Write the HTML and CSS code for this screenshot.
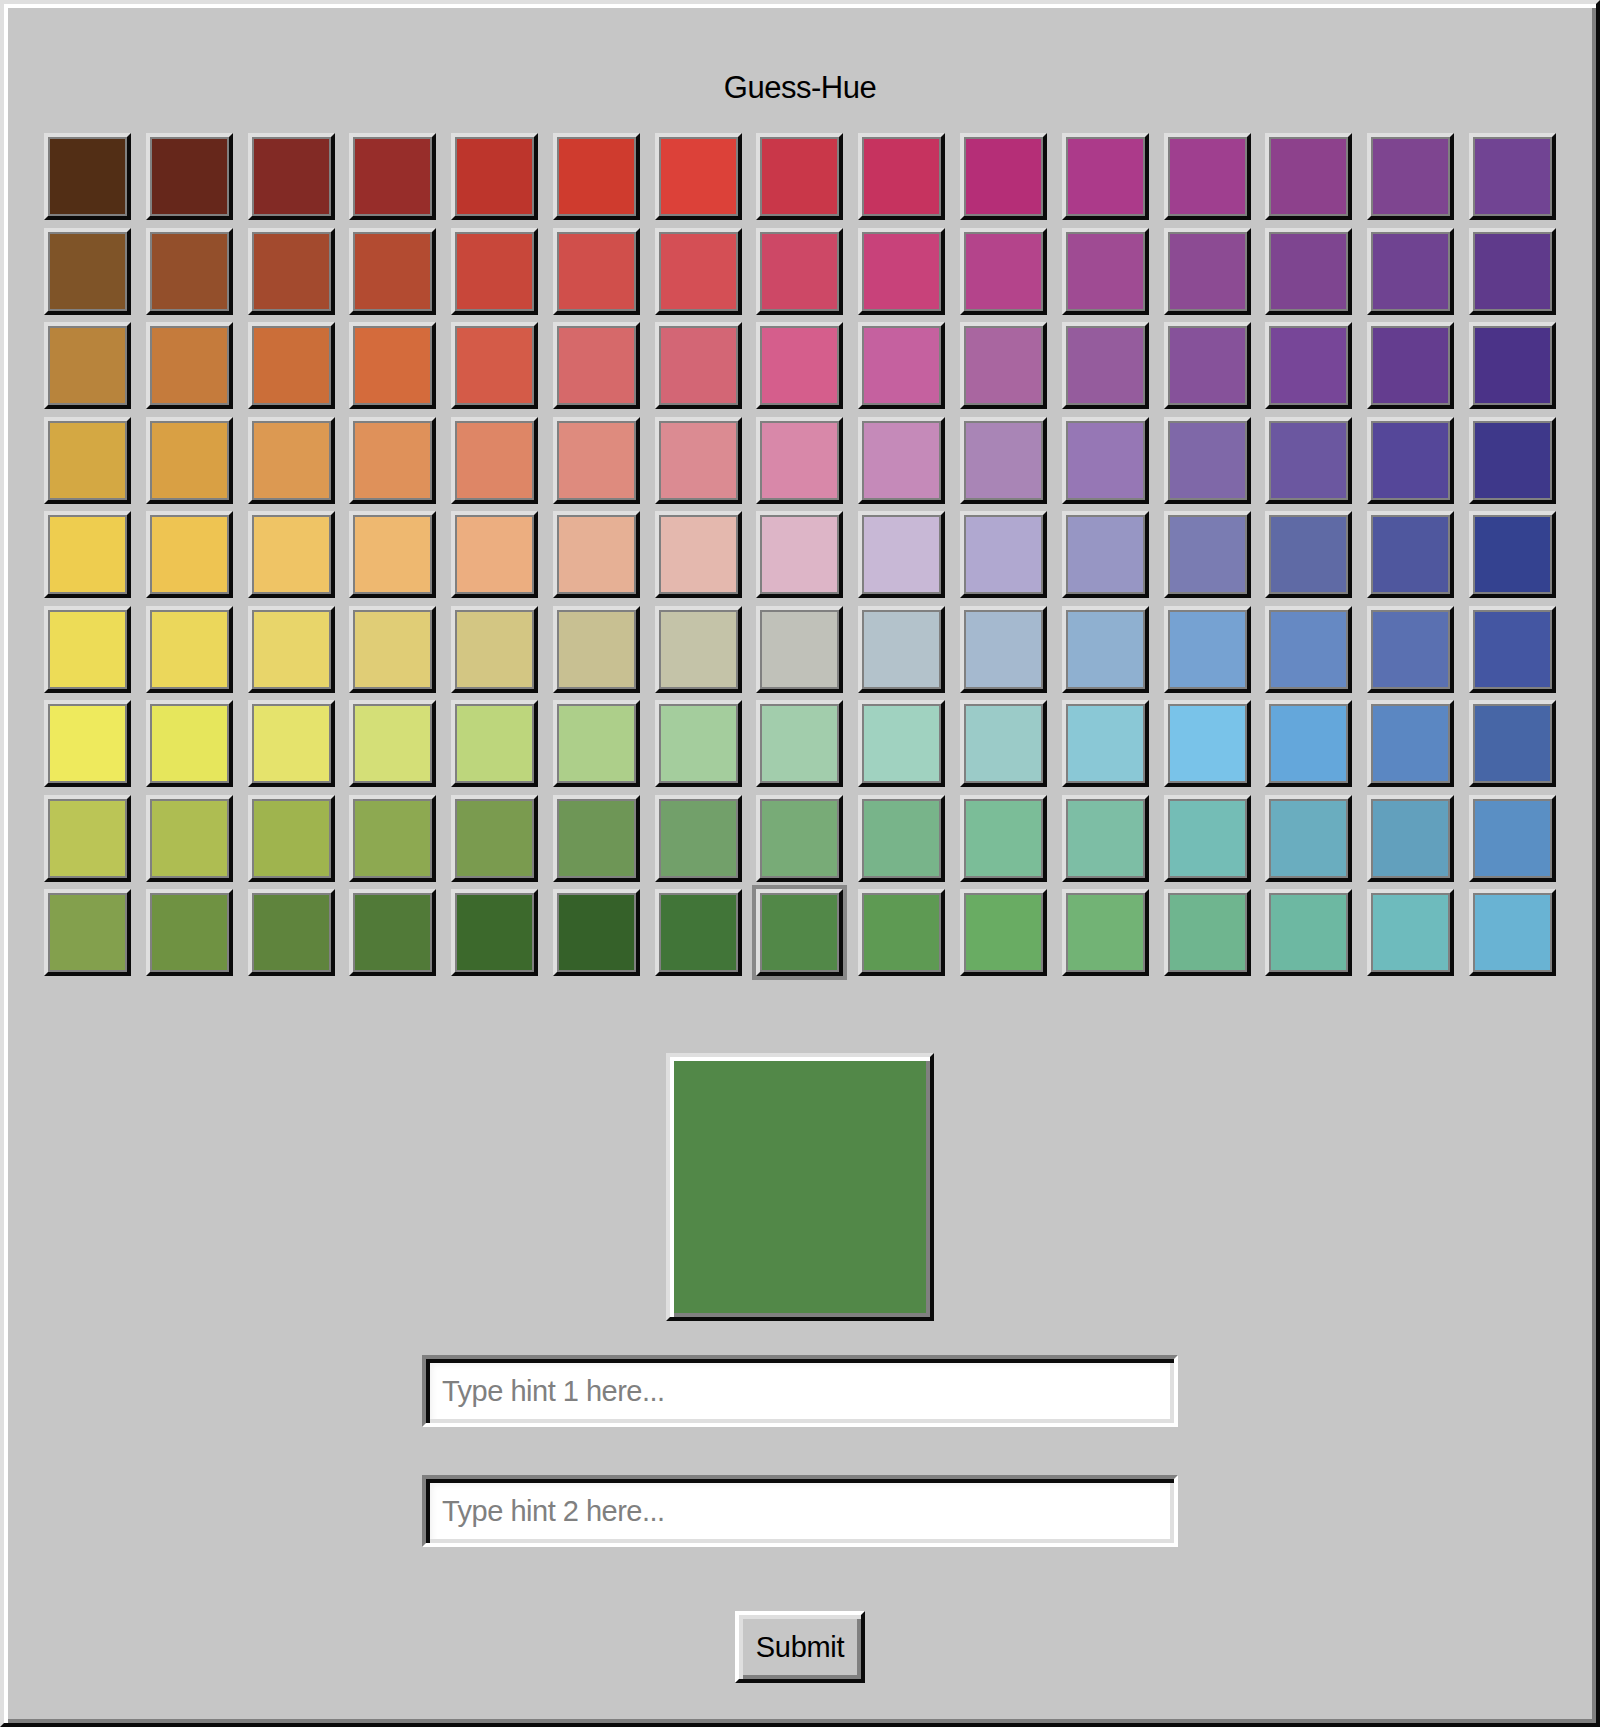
FILE: index.html
```html
<!DOCTYPE html>
<html lang="en">
<head>
<meta charset="utf-8">
<title>Guess-Hue</title>
<link rel="stylesheet" href="styles.css">
</head>
<body>
<div class="window">
  <h1 class="title">Guess-Hue</h1>
  <div class="grid">
    <div class="sw" style="background:#522e15"></div>
    <div class="sw" style="background:#66271b"></div>
    <div class="sw" style="background:#822a25"></div>
    <div class="sw" style="background:#972d2a"></div>
    <div class="sw" style="background:#bd352c"></div>
    <div class="sw" style="background:#cf3b2e"></div>
    <div class="sw" style="background:#dc4139"></div>
    <div class="sw" style="background:#c93749"></div>
    <div class="sw" style="background:#c6335f"></div>
    <div class="sw" style="background:#b52e77"></div>
    <div class="sw" style="background:#ac3a8a"></div>
    <div class="sw" style="background:#9f3f8f"></div>
    <div class="sw" style="background:#8d418c"></div>
    <div class="sw" style="background:#7e4590"></div>
    <div class="sw" style="background:#714493"></div>

    <div class="sw" style="background:#7f5428"></div>
    <div class="sw" style="background:#934f2b"></div>
    <div class="sw" style="background:#a34a2e"></div>
    <div class="sw" style="background:#b34b31"></div>
    <div class="sw" style="background:#c8473a"></div>
    <div class="sw" style="background:#d04f4b"></div>
    <div class="sw" style="background:#d44f55"></div>
    <div class="sw" style="background:#cd4866"></div>
    <div class="sw" style="background:#c8427a"></div>
    <div class="sw" style="background:#b4448b"></div>
    <div class="sw" style="background:#9f4b93"></div>
    <div class="sw" style="background:#8c4b93"></div>
    <div class="sw" style="background:#7e4590"></div>
    <div class="sw" style="background:#6f4391"></div>
    <div class="sw" style="background:#5f3a8b"></div>

    <div class="sw" style="background:#b8843c"></div>
    <div class="sw" style="background:#c57b3c"></div>
    <div class="sw" style="background:#cb6e39"></div>
    <div class="sw" style="background:#d46b3c"></div>
    <div class="sw" style="background:#d45b48"></div>
    <div class="sw" style="background:#d6696a"></div>
    <div class="sw" style="background:#d36675"></div>
    <div class="sw" style="background:#d55e8c"></div>
    <div class="sw" style="background:#c5619f"></div>
    <div class="sw" style="background:#a966a0"></div>
    <div class="sw" style="background:#955c9d"></div>
    <div class="sw" style="background:#86529a"></div>
    <div class="sw" style="background:#774698"></div>
    <div class="sw" style="background:#643d8f"></div>
    <div class="sw" style="background:#4b3388"></div>

    <div class="sw" style="background:#d4a843"></div>
    <div class="sw" style="background:#d9a044"></div>
    <div class="sw" style="background:#dc9952"></div>
    <div class="sw" style="background:#df915a"></div>
    <div class="sw" style="background:#de8666"></div>
    <div class="sw" style="background:#de8b7e"></div>
    <div class="sw" style="background:#db8b92"></div>
    <div class="sw" style="background:#d888a9"></div>
    <div class="sw" style="background:#c58ab9"></div>
    <div class="sw" style="background:#a985b6"></div>
    <div class="sw" style="background:#9677b5"></div>
    <div class="sw" style="background:#7f68a8"></div>
    <div class="sw" style="background:#6b57a0"></div>
    <div class="sw" style="background:#554799"></div>
    <div class="sw" style="background:#3e388a"></div>

    <div class="sw" style="background:#eecd4f"></div>
    <div class="sw" style="background:#eec452"></div>
    <div class="sw" style="background:#efc465"></div>
    <div class="sw" style="background:#eeb870"></div>
    <div class="sw" style="background:#ecae80"></div>
    <div class="sw" style="background:#e6b095"></div>
    <div class="sw" style="background:#e4b8ae"></div>
    <div class="sw" style="background:#ddb5c7"></div>
    <div class="sw" style="background:#c8b8d6"></div>
    <div class="sw" style="background:#b0a8d0"></div>
    <div class="sw" style="background:#9796c4"></div>
    <div class="sw" style="background:#7a7cb2"></div>
    <div class="sw" style="background:#5f6aa5"></div>
    <div class="sw" style="background:#4f579e"></div>
    <div class="sw" style="background:#344290"></div>

    <div class="sw" style="background:#eddc57"></div>
    <div class="sw" style="background:#ebd75b"></div>
    <div class="sw" style="background:#e8d56a"></div>
    <div class="sw" style="background:#e0cd76"></div>
    <div class="sw" style="background:#d3c683"></div>
    <div class="sw" style="background:#c8c092"></div>
    <div class="sw" style="background:#c4c3a8"></div>
    <div class="sw" style="background:#c0c1b9"></div>
    <div class="sw" style="background:#b3c2cb"></div>
    <div class="sw" style="background:#a5b9cf"></div>
    <div class="sw" style="background:#8fb0d0"></div>
    <div class="sw" style="background:#76a2d2"></div>
    <div class="sw" style="background:#6689c3"></div>
    <div class="sw" style="background:#5a70b1"></div>
    <div class="sw" style="background:#4456a2"></div>

    <div class="sw" style="background:#eeea5d"></div>
    <div class="sw" style="background:#e6e65c"></div>
    <div class="sw" style="background:#e5e36c"></div>
    <div class="sw" style="background:#d4df77"></div>
    <div class="sw" style="background:#bdd67c"></div>
    <div class="sw" style="background:#adcf8a"></div>
    <div class="sw" style="background:#a4cd9d"></div>
    <div class="sw" style="background:#a2cdac"></div>
    <div class="sw" style="background:#a0d2c0"></div>
    <div class="sw" style="background:#9bcbc8"></div>
    <div class="sw" style="background:#8ac8d6"></div>
    <div class="sw" style="background:#79c3e9"></div>
    <div class="sw" style="background:#64a7db"></div>
    <div class="sw" style="background:#5b87c2"></div>
    <div class="sw" style="background:#4766a6"></div>

    <div class="sw" style="background:#bbc556"></div>
    <div class="sw" style="background:#aebd52"></div>
    <div class="sw" style="background:#9fb44e"></div>
    <div class="sw" style="background:#8da951"></div>
    <div class="sw" style="background:#7a9b4f"></div>
    <div class="sw" style="background:#6e9656"></div>
    <div class="sw" style="background:#72a06a"></div>
    <div class="sw" style="background:#78ab77"></div>
    <div class="sw" style="background:#78b48a"></div>
    <div class="sw" style="background:#7bbd98"></div>
    <div class="sw" style="background:#7dbea5"></div>
    <div class="sw" style="background:#74bdb6"></div>
    <div class="sw" style="background:#6aadbf"></div>
    <div class="sw" style="background:#62a0bd"></div>
    <div class="sw" style="background:#5a8fc4"></div>

    <div class="sw" style="background:#83a04d"></div>
    <div class="sw" style="background:#6f9242"></div>
    <div class="sw" style="background:#5f843d"></div>
    <div class="sw" style="background:#517a38"></div>
    <div class="sw" style="background:#3c692c"></div>
    <div class="sw" style="background:#356129"></div>
    <div class="sw" style="background:#417538"></div>
    <div class="sw selected" style="background:#528848"></div>
    <div class="sw" style="background:#5e9a53"></div>
    <div class="sw" style="background:#69ac63"></div>
    <div class="sw" style="background:#72b375"></div>
    <div class="sw" style="background:#6fb58f"></div>
    <div class="sw" style="background:#6db8a2"></div>
    <div class="sw" style="background:#6ebbbd"></div>
    <div class="sw" style="background:#69b3d3"></div>
  </div>

  <div class="preview" style="background:#528848"></div>

  <input class="field first" type="text" placeholder="Type hint 1 here...">
  <input class="field second" type="text" placeholder="Type hint 2 here...">

  <button class="submit" type="button">Submit</button>
</div>
</body>
</html>
```

FILE: styles.css
```css
html, body {
  margin: 0;
  padding: 0;
  background: #c6c6c6;
}

.window {
  box-sizing: border-box;
  width: 1600px;
  height: 1727px;
  background: #c6c6c6;
  border: 4px solid;
  border-color: #dfdfdf #0a0a0a #0a0a0a #dfdfdf;
  box-shadow: inset 4px 4px #ffffff, inset -4px -4px #808080;
  padding: 66px 40px 40px;
  display: flex;
  flex-direction: column;
  align-items: center;
  font-family: "Liberation Sans", Arial, sans-serif;
}

.title {
  margin: 0;
  font-size: 31px;
  font-weight: normal;
  line-height: 36px;
  letter-spacing: -0.5px;
  color: #000;
}

.grid {
  margin-top: 27px;
  width: 1512px;
  display: grid;
  grid-template-columns: repeat(15, 87px);
  grid-auto-rows: 87px;
  justify-content: space-between;
  row-gap: 7.5px;
}

.sw {
  box-sizing: border-box;
  width: 87px;
  height: 87px;
  border: 4px solid;
  border-color: #dfdfdf #0a0a0a #0a0a0a #dfdfdf;
  box-shadow: inset 0 0 0 2px #808080;
}

.sw.selected {
  outline: 4px solid #888888;
}

.preview {
  box-sizing: border-box;
  margin-top: 77px;
  width: 268px;
  height: 268px;
  border: 4px solid;
  border-color: #dfdfdf #0a0a0a #0a0a0a #dfdfdf;
  box-shadow: inset 4px 4px #ffffff, inset -4px -4px #808080;
}

.field {
  box-sizing: border-box;
  width: 756px;
  height: 72px;
  margin: 0;
  padding: 0 16px;
  border: 4px solid;
  border-color: #808080 #ffffff #ffffff #808080;
  box-shadow: inset 4px 4px #0a0a0a, inset -4px -4px #dfdfdf, inset 6px 6px 6px rgba(0, 0, 0, 0.06);
  background: #ffffff;
  font-family: "Liberation Sans", Arial, sans-serif;
  font-size: 29px;
  letter-spacing: -0.5px;
  color: #000;
  outline: none;
}

.field::placeholder {
  color: #808080;
  opacity: 1;
}

.field.first {
  margin-top: 34px;
}

.field.second {
  margin-top: 48px;
}

.submit {
  box-sizing: border-box;
  margin-top: 64px;
  width: 130px;
  height: 72px;
  padding: 0;
  border: 4px solid;
  border-color: #ffffff #0a0a0a #0a0a0a #ffffff;
  box-shadow: inset 4px 4px #dfdfdf, inset -4px -4px #808080;
  background: #c6c6c6;
  font-family: "Liberation Sans", Arial, sans-serif;
  font-size: 29px;
  letter-spacing: -0.3px;
  color: #000;
}
```
